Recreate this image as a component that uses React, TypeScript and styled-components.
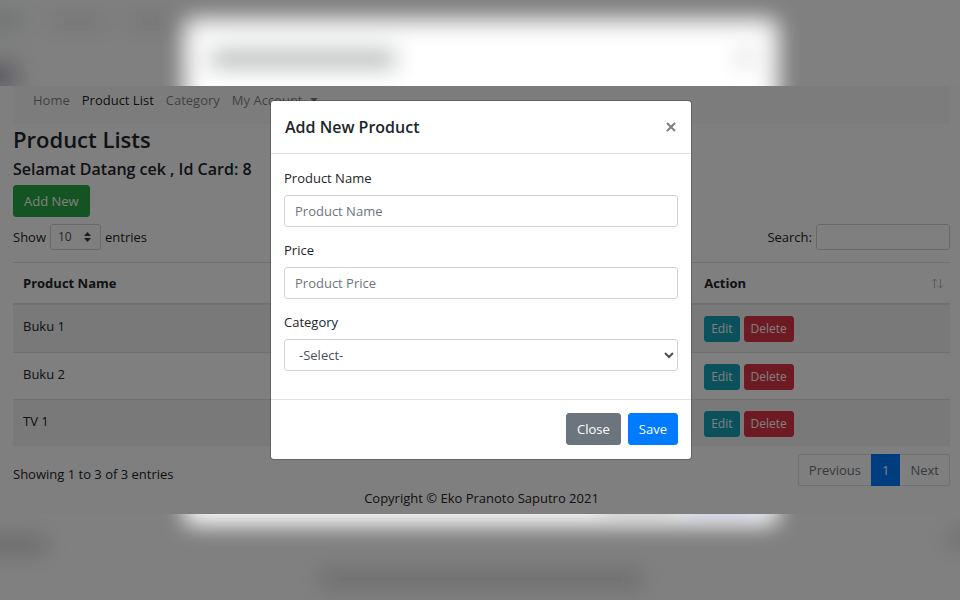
import React from "react";
import styled, { createGlobalStyle } from "styled-components";

const GlobalStyle = createGlobalStyle`
  *, *::before, *::after { box-sizing: border-box; }
  body {
    margin: 0;
    background: #808080;
    color: #212529;
    font-family: "Open Sans", "Noto Sans", sans-serif;
    font-size: 13px;
    line-height: 20px;
  }
  button, input, select { font-family: inherit; font-size: inherit; line-height: inherit; margin: 0; }
`;

const Page = styled.div`
  position: relative;
  min-height: 100vh;
  display: flex;
  flex-direction: column;
  justify-content: center;
  overflow: hidden;
`;

const Glow = styled.svg`
  position: absolute;
  inset: 0;
  width: 100%;
  height: 100%;
`;

const Stage = styled.div`
  position: relative;
  background: #fff;
  padding: 0 10px 6px 13px;
`;

const Navbar = styled.nav`
  display: flex;
  gap: 12px;
  padding: 4px 20px 14px;
  background: #f8f9fa;
`;

const NavLink = styled.a<{ $active?: boolean }>`
  display: flex;
  align-items: center;
  gap: 8px;
  color: ${(p) => (p.$active ? "rgba(0,0,0,.9)" : "rgba(0,0,0,.5)")};
  text-decoration: none;
`;

const Title = styled.h3`
  margin: 0;
  font-size: 22px;
  line-height: 30px;
  font-weight: 600;
`;

const Greeting = styled.h5`
  margin: 4px 0;
  font-size: 16px;
  line-height: 23px;
  font-weight: 600;
`;

const Button = styled.button<{ $color: string; $small?: boolean }>`
  height: ${(p) => (p.$small ? 26 : 32)}px;
  padding: 0 ${(p) => (p.$small ? 6 : 10)}px;
  font-size: ${(p) => (p.$small ? 12 : 13)}px;
  border: 1px solid ${(p) => p.$color};
  border-radius: 3px;
  background: ${(p) => p.$color};
  color: #fff;
`;

const Controls = styled.div`
  display: flex;
  justify-content: space-between;
  margin: 7px 0 12px;
`;

const ControlLabel = styled.label`
  display: flex;
  align-items: center;
  gap: 4px;
`;

const LengthBox = styled.span`
  position: relative;
  display: flex;
  svg { position: absolute; right: 10px; top: 8px; pointer-events: none; }
`;

const LengthSelect = styled.select`
  appearance: none;
  width: 51px;
  height: 26px;
  padding: 0 7px;
  border: 1px solid #ced4da;
  border-radius: 3px;
  background: #fff;
  color: #495057;
  && { font-size: 12px; }
`;

const SearchInput = styled.input`
  width: 134px;
  height: 26px;
  padding: 0 7px;
  border: 1px solid #ced4da;
  border-radius: 3px;
`;

const Table = styled.table`
  width: 100%;
  table-layout: fixed;
  border-collapse: separate;
  border-spacing: 0;
`;

const HeadCell = styled.th<{ $width?: string }>`
  width: ${(p) => p.$width ?? "auto"};
  height: 43px;
  padding: 0 10px;
  border-top: 1px solid #dee2e6;
  border-bottom: 2px solid #dee2e6;
  text-align: left;
  font-weight: 700;
`;

const HeadContent = styled.span`
  display: flex;
  justify-content: space-between;
  align-items: center;
  svg { margin-right: -4px; }
`;

const Row = styled.tr`
  &:nth-child(odd) { background: #f2f2f2; }
  & + & td { border-top: 1px solid #dee2e6; }
`;

const Cell = styled.td`
  height: 47px;
  padding: 11px 10px 9px;
  vertical-align: top;
`;

const Actions = styled.div`
  display: flex;
  gap: 4px;
`;

const TableFooter = styled.div`
  display: flex;
  justify-content: space-between;
  margin-top: 8px;
`;

const Info = styled.div`
  padding-top: 10px;
`;

const Pagination = styled.div`
  display: flex;
  height: 32px;
`;

const PageButton = styled.button<{ $active?: boolean }>`
  padding: 0 10px;
  border: 1px solid ${(p) => (p.$active ? "#007bff" : "#dee2e6")};
  background: ${(p) => (p.$active ? "#007bff" : "#fff")};
  color: ${(p) => (p.$active ? "#fff" : "#6c757d")};
  &:first-child { border-radius: 3px 0 0 3px; border-right: 0; }
  &:last-child { border-radius: 0 3px 3px 0; border-left: 0; }
`;

const Copyright = styled.footer`
  text-align: center;
  margin-top: 2px;
`;

const Overlay = styled.div`
  position: absolute;
  inset: 0;
  display: flex;
  justify-content: center;
  align-items: flex-start;
  padding: 15px 10px 0 12px;
  background: rgba(0, 0, 0, 0.5);
`;

const Dialog = styled.form`
  width: 100%;
  max-width: 420px;
  border-radius: 3px;
  background: #fff;
  box-shadow: 0 0 0 1px rgba(0, 0, 0, 0.2);
`;

const DialogHeader = styled.header`
  display: flex;
  justify-content: space-between;
  align-items: center;
  height: 53px;
  padding: 0 13px 0 14px;
  border-bottom: 1px solid #dee2e6;
`;

const DialogTitle = styled.h5`
  margin: 0;
  font-size: 16px;
  line-height: 24px;
  font-weight: 600;
`;

const CloseButton = styled.button`
  display: flex;
  padding: 2px;
  border: 0;
  background: transparent;
  color: #7f7f7f;
`;

const DialogBody = styled.div`
  display: grid;
  gap: 13px;
  padding: 14px 13px 28px;
`;

const Field = styled.div`
  display: grid;
  gap: 7px;
`;

const TextInput = styled.input`
  width: 100%;
  height: 32px;
  padding: 0 10px;
  border: 1px solid #ced4da;
  border-radius: 3px;
  &::placeholder { color: #6c757d; opacity: 1; }
`;

const CategorySelect = styled.select`
  width: 100%;
  height: 32px;
  padding: 0 0 0 10px;
  border: 1px solid #ced4da;
  border-radius: 3px;
  background: #fff;
  color: #495057;
`;

const DialogFooter = styled.footer`
  display: flex;
  justify-content: flex-end;
  gap: 7px;
  padding: 13px 13px 14px;
  border-top: 1px solid #dee2e6;
`;

const products = ["Buku 1", "Buku 2", "TV 1"];

export default function App() {
  return (
    <Page>
      <GlobalStyle />
      <Glow viewBox="0 0 960 600" preserveAspectRatio="xMidYMid slice" aria-hidden="true">
        <defs>
          <filter id="soft" x="-20%" y="-20%" width="140%" height="140%" filterUnits="objectBoundingBox">
            <feGaussianBlur stdDeviation="11" />
          </filter>
        </defs>
        <g filter="url(#soft)">
          <rect x="-60" y="-60" width="1080" height="720" fill="#808080" />
          <rect x="-60" y="12" width="84" height="18" fill="#707474" />
          <rect x="48" y="12" width="60" height="18" fill="#777777" />
          <rect x="126" y="12" width="50" height="18" fill="#777777" />
          <rect x="-60" y="62" width="78" height="28" fill="#5c5c62" />
          <rect x="187" y="22" width="588" height="500" rx="4" fill="#fff" />
          <rect x="210" y="49" width="186" height="20" fill="#b4b8b8" />
          <rect x="738" y="51" width="14" height="14" fill="#c8c8c8" />
          <rect x="602" y="458" width="76" height="46" fill="#6c757d" />
          <rect x="687" y="458" width="70" height="46" fill="#007bff" />
          <rect x="-60" y="536" width="106" height="18" fill="#686868" />
          <rect x="320" y="570" width="322" height="18" fill="#6a6a6a" />
          <rect x="946" y="530" width="80" height="18" fill="#707070" />
        </g>
      </Glow>
      <Stage>
        <Navbar>
          <NavLink href="#home">Home</NavLink>
          <NavLink href="#products" $active>Product List</NavLink>
          <NavLink href="#category">Category</NavLink>
          <NavLink href="#account">
            My Account
            <svg width="8" height="4" viewBox="0 0 8 4" aria-hidden="true"><path d="M0 0h8L4 4z" fill="currentColor" /></svg>
          </NavLink>
        </Navbar>
        <Title>Product Lists</Title>
        <Greeting>Selamat Datang cek , Id Card: 8</Greeting>
        <Button type="button" $color="#28a745">Add New</Button>
        <Controls>
          <ControlLabel>
            Show
            <LengthBox>
              <LengthSelect defaultValue="10">
                <option>10</option>
                <option>25</option>
              </LengthSelect>
              <svg width="7" height="10" viewBox="0 0 7 10" aria-hidden="true">
                <path d="M3.5 0L7 4H0zM0 6h7L3.5 10z" fill="#343a40" />
              </svg>
            </LengthBox>
            entries
          </ControlLabel>
          <ControlLabel>
            Search:
            <SearchInput type="search" />
          </ControlLabel>
        </Controls>
        <Table>
          <thead>
            <tr>
              <HeadCell scope="col">Product Name</HeadCell>
              <HeadCell scope="col" $width="27.3%">
                <HeadContent>
                  Action
                  <svg width="13" height="11" viewBox="0 0 13 11" fill="none" stroke="#bcbcbc" aria-hidden="true">
                    <path d="M3.5 10V1M1 3.5L3.5 1L6 3.5M9.5 1V10M7 7.5L9.5 10L12 7.5" />
                  </svg>
                </HeadContent>
              </HeadCell>
            </tr>
          </thead>
          <tbody>
            {products.map((name) => (
              <Row key={name}>
                <Cell>{name}</Cell>
                <Cell>
                  <Actions>
                    <Button type="button" $small $color="#17a2b8">Edit</Button>
                    <Button type="button" $small $color="#dc3545">Delete</Button>
                  </Actions>
                </Cell>
              </Row>
            ))}
          </tbody>
        </Table>
        <TableFooter>
          <Info>Showing 1 to 3 of 3 entries</Info>
          <Pagination>
            <PageButton type="button">Previous</PageButton>
            <PageButton type="button" $active>1</PageButton>
            <PageButton type="button">Next</PageButton>
          </Pagination>
        </TableFooter>
        <Copyright>Copyright © Eko Pranoto Saputro 2021</Copyright>
        <Overlay>
          <Dialog role="dialog" aria-modal="true" aria-labelledby="dialog-title">
            <DialogHeader>
              <DialogTitle id="dialog-title">Add New Product</DialogTitle>
              <CloseButton type="button" aria-label="Close dialog">
                <svg width="10" height="10" viewBox="0 0 10 10" aria-hidden="true">
                  <path d="M1 1l8 8M9 1L1 9" stroke="currentColor" strokeWidth="2" />
                </svg>
              </CloseButton>
            </DialogHeader>
            <DialogBody>
              <Field>
                <label htmlFor="name">Product Name</label>
                <TextInput id="name" placeholder="Product Name" />
              </Field>
              <Field>
                <label htmlFor="price">Price</label>
                <TextInput id="price" placeholder="Product Price" />
              </Field>
              <Field>
                <label htmlFor="category">Category</label>
                <CategorySelect id="category">
                  <option>-Select-</option>
                </CategorySelect>
              </Field>
            </DialogBody>
            <DialogFooter>
              <Button type="button" $color="#6c757d">Close</Button>
              <Button type="submit" $color="#007bff">Save</Button>
            </DialogFooter>
          </Dialog>
        </Overlay>
      </Stage>
    </Page>
  );
}
